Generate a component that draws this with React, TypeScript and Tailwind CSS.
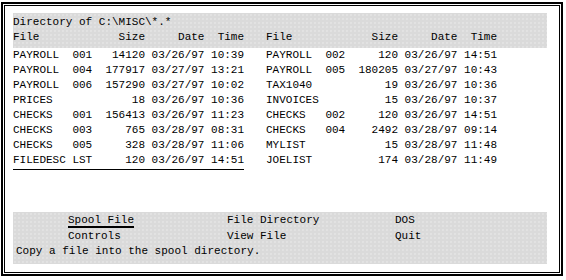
import React from "react";

type Row = [string, string, string, string, string];

const left: Row[] = [
  ["PAYROLL", "001", "14120", "03/26/97", "10:39"],
  ["PAYROLL", "004", "177917", "03/27/97", "13:21"],
  ["PAYROLL", "006", "157290", "03/27/97", "10:02"],
  ["PRICES", "", "18", "03/26/97", "10:36"],
  ["CHECKS", "001", "156413", "03/26/97", "11:23"],
  ["CHECKS", "003", "765", "03/28/97", "08:31"],
  ["CHECKS", "005", "328", "03/28/97", "11:06"],
  ["FILEDESC", "LST", "120", "03/26/97", "14:51"],
];

const right: Row[] = [
  ["PAYROLL", "002", "120", "03/26/97", "14:51"],
  ["PAYROLL", "005", "180205", "03/27/97", "10:43"],
  ["TAX1040", "", "19", "03/26/97", "10:36"],
  ["INVOICES", "", "15", "03/26/97", "10:37"],
  ["CHECKS", "002", "120", "03/26/97", "14:51"],
  ["CHECKS", "004", "2492", "03/28/97", "09:14"],
  ["MYLIST", "", "15", "03/28/97", "11:48"],
  ["JOELIST", "", "174", "03/28/97", "11:49"],
];

const fmt = (r: Row) =>
  `${r[0].padEnd(9)}${r[1].padEnd(3)}${r[2].padStart(8)} ${r[3]} ${r[4]}`;

const HDR = "File            Size     Date  Time";

export default function App() {
  return (
    <div
      className="w-[566px] h-[280px] bg-white pt-[2px] pl-[1px] text-black text-[11px] whitespace-pre"
      style={{ fontFamily: '"Liberation Mono", "Courier New", monospace' }}
    >
      <div className="w-[562px] h-[274px] border-2 border-black p-px">
        <div className="h-full border border-black pl-[8px] pr-[12px] pt-[7px] pb-[8px] flex flex-col">
          <div className="bg-[#dadada] bg-[radial-gradient(circle,#e6e6e6_0.6px,transparent_0.9px)] bg-size-[4px_4px] h-[35px] pt-[2px] leading-[15px]">
            <div>Directory of C:\MISC\*.*</div>
            <div className="flex">
              <span className="w-[253px]">{HDR}</span>
              <span>{HDR}</span>
            </div>
          </div>
          <div className="leading-[15px]">
            {left.map((l, i) => (
              <div key={i} className="flex">
                <div className="w-[253px]">
                  <span
                    className={
                      i === left.length - 1
                        ? "inline-block pb-px border-b border-black"
                        : "inline-block"
                    }
                  >
                    {fmt(l)}
                  </span>
                </div>
                <div>{fmt(right[i])}</div>
              </div>
            ))}
          </div>
          <div className="mt-auto bg-[#dadada] bg-[radial-gradient(circle,#e6e6e6_0.6px,transparent_0.9px)] bg-size-[4px_4px] h-[52px] pt-[1px] leading-[15.5px]">
            <div className="flex">
              <span className="w-[55px]" />
              <span className="w-[159px]">
                <span className="underline decoration-2 underline-offset-[3px]">
                  Spool File
                </span>
              </span>
              <span className="w-[168px]">File Directory</span>
              <span>DOS</span>
            </div>
            <div className="flex">
              <span className="w-[55px]" />
              <span className="w-[159px]">Controls</span>
              <span className="w-[168px]">View File</span>
              <span>Quit</span>
            </div>
            <div className="pl-[3px]">Copy a file into the spool directory.</div>
          </div>
        </div>
      </div>
    </div>
  );
}
